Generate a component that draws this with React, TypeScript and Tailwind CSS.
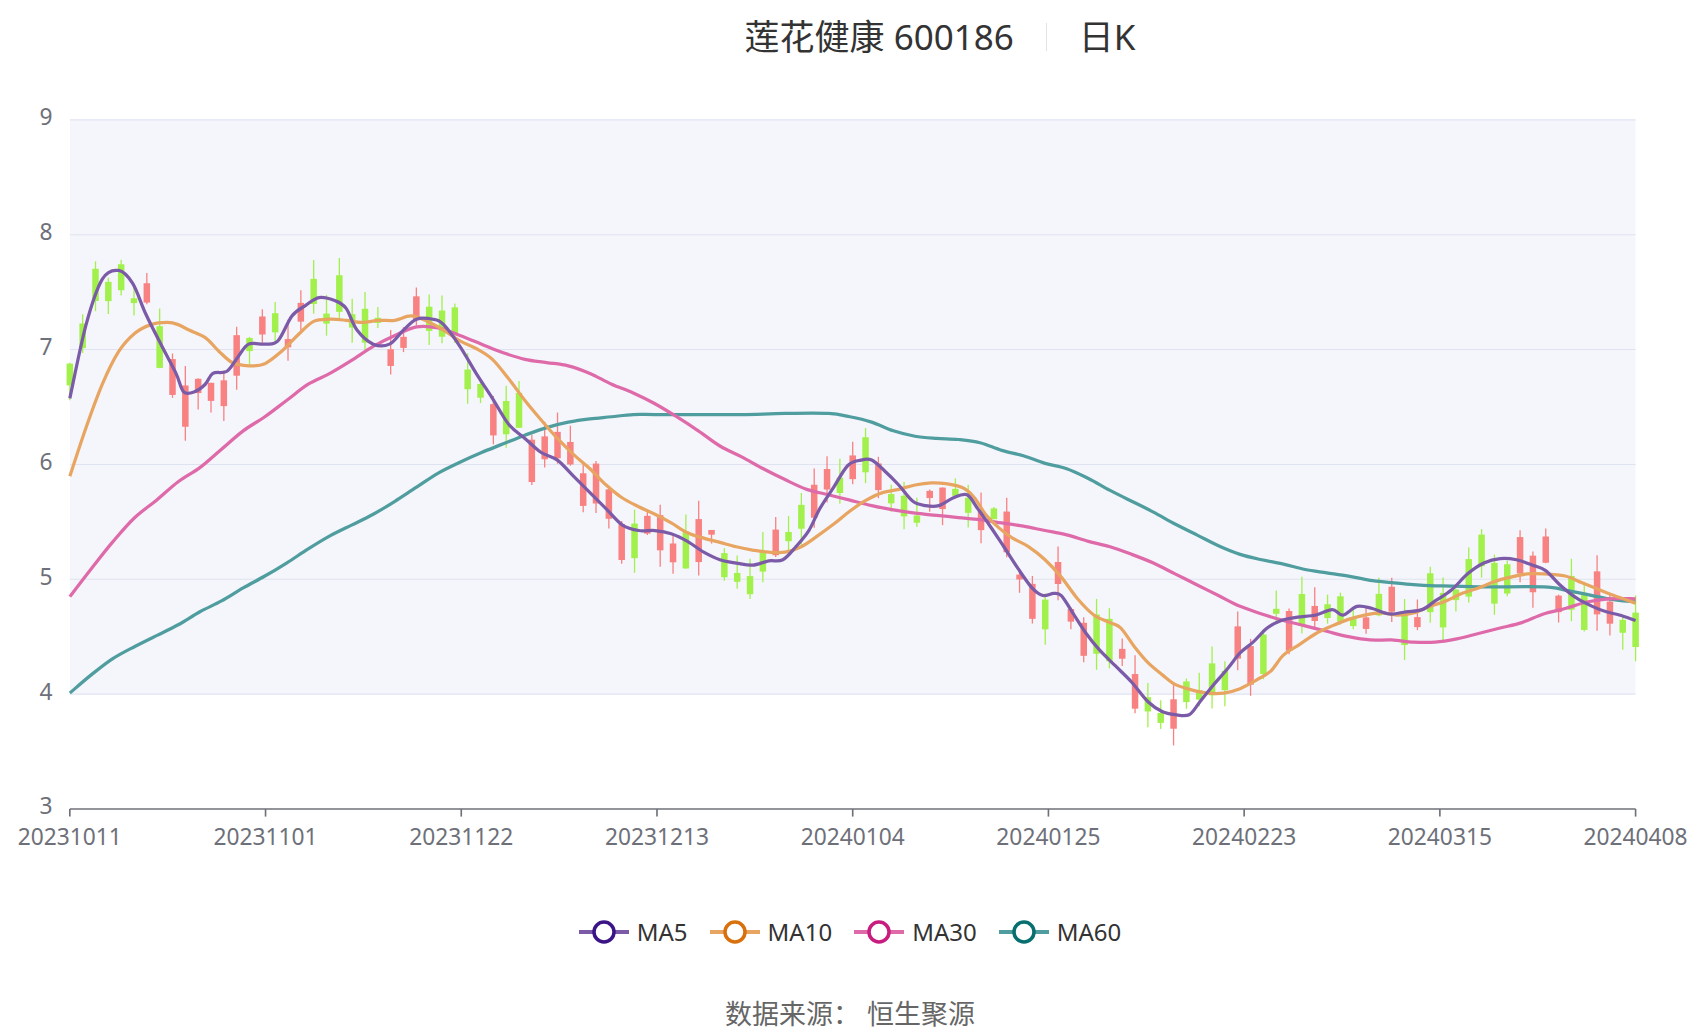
import React from "react";

type P = [number, number];

const MA5: P[] = [[60,368],[75,300],[90,258],[105,250],[118,262],[130,290],[145,320],[158,345],[165,362],[175,362],[185,355],[192,345],[205,343],[215,330],[225,318],[240,318],[252,315],[265,292],[278,282],[290,275],[305,278],[315,285],[325,305],[340,318],[355,318],[368,305],[380,295],[395,295],[405,300],[420,320],[435,345],[450,368],[465,392],[480,405],[495,418],[510,425],[525,440],[540,455],[555,470],[570,485],[585,490],[600,490],[615,493],[630,500],[645,510],[660,517],[675,520],[690,522],[705,518],[718,517],[730,505],[742,490],[752,470],[765,450],[778,430],[790,425],[800,425],[812,435],[825,448],[838,463],[850,467],[862,467],[875,460],[888,457],[898,470],[910,487],[922,505],[935,525],[948,543],[958,550],[968,548],[975,550],[985,565],[998,585],[1010,600],[1025,615],[1040,630],[1055,648],[1068,657],[1080,660],[1093,660],[1103,648],[1115,633],[1128,618],[1140,603],[1152,593],[1165,580],[1178,573],[1193,570],[1210,568],[1225,563],[1235,568],[1248,560],[1262,562],[1278,567],[1293,565],[1308,563],[1320,555],[1335,545],[1350,530],[1365,520],[1380,516],[1395,517],[1410,522],[1422,527],[1435,540],[1450,552],[1465,560],[1478,565],[1490,568],[1505,573]];
const MA10: P[] = [[60,440],[75,395],[90,355],[105,325],[120,308],[135,300],[150,298],[160,300],[170,305],[185,312],[198,325],[210,335],[225,338],[240,336],[255,325],[270,310],[285,297],[300,295],[315,296],[330,298],[345,296],[360,296],[375,292],[390,297],[405,305],[420,315],[435,322],[450,332],[465,350],[480,370],[495,388],[510,405],[525,420],[540,433],[555,448],[570,460],[585,468],[600,475],[615,483],[630,492],[645,497],[660,501],[675,505],[690,508],[705,510],[720,510],[735,505],[750,495],[765,484],[780,472],[795,462],[810,455],[825,452],[840,448],[855,446],[870,447],[885,451],[895,460],[905,475],[918,488],[930,497],[945,505],[960,517],[975,533],[990,553],[1005,568],[1020,575],[1030,580],[1043,598],[1055,612],[1068,623],[1080,632],[1095,637],[1110,640],[1125,640],[1140,636],[1155,628],[1168,620],[1180,605],[1195,595],[1210,585],[1225,578],[1240,572],[1255,568],[1270,566],[1285,568],[1300,566],[1315,560],[1330,555],[1345,548],[1360,543],[1375,537],[1390,533],[1405,530],[1420,530],[1440,532],[1455,538],[1470,544],[1485,550],[1505,557]];
const MA30: P[] = [[60,551],[80,525],[100,500],[120,478],[140,462],[160,445],[180,432],[200,415],[220,398],[240,385],[260,370],[280,355],[300,345],[320,333],[340,320],[360,310],[380,302],[400,303],[420,310],[440,318],[460,326],[480,332],[500,335],[520,338],[540,345],[560,355],[580,363],[600,373],[620,385],[640,398],[660,412],[680,422],[700,433],[720,443],[740,452],[760,457],[780,462],[800,467],[820,471],[840,474],[860,476],[880,478],[900,480],[920,483],[940,486],[960,490],[980,494],[1000,500],[1020,505],[1040,512],[1060,520],[1080,530],[1100,540],[1120,550],[1140,560],[1160,567],[1180,573],[1200,578],[1220,583],[1240,588],[1260,591],[1280,591],[1300,593],[1320,593],[1340,590],[1360,585],[1380,580],[1400,575],[1420,567],[1440,562],[1460,556],[1480,553],[1505,553]];
const MA60: P[] = [[60,640],[80,623],[100,608],[120,597],[140,587],[160,577],[180,565],[200,555],[220,543],[240,532],[260,520],[280,507],[300,495],[320,485],[340,475],[360,463],[380,450],[400,437],[420,427],[440,418],[460,410],[480,402],[500,395],[520,390],[540,387],[560,385],[580,383],[600,383],[640,383],[680,383],[720,382],[760,382],[780,385],[800,390],[820,398],[840,403],[860,405],[880,406],[900,409],[920,416],[940,421],[960,428],[980,433],[1000,442],[1020,453],[1040,463],[1060,473],[1080,484],[1100,494],[1120,504],[1140,512],[1160,517],[1180,521],[1200,526],[1220,529],[1240,532],[1260,536],[1280,538],[1300,540],[1320,541],[1360,542],[1420,542],[1440,545],[1460,549],[1480,553],[1505,556]];

function smooth(pts: P[]) {
  let d = `M${pts[0][0]},${pts[0][1]}`;
  for (let i = 0; i < pts.length - 1; i++) {
    const p0 = pts[i - 1] || pts[i], p1 = pts[i], p2 = pts[i + 1], p3 = pts[i + 2] || p2;
    const c1x = p1[0] + (p2[0] - p0[0]) / 6, c1y = p1[1] + (p2[1] - p0[1]) / 6;
    const c2x = p2[0] - (p3[0] - p1[0]) / 6, c2y = p2[1] - (p3[1] - p1[1]) / 6;
    d += ` C${c1x.toFixed(1)},${c1y.toFixed(1)} ${c2x.toFixed(1)},${c2y.toFixed(1)} ${p2[0]},${p2[1]}`;
  }
  return d;
}

function at(pts: P[], x: number) {
  for (let i = 0; i < pts.length - 1; i++) {
    if (x <= pts[i + 1][0]) {
      const t = (x - pts[i][0]) / (pts[i + 1][0] - pts[i][0]);
      return pts[i][1] + t * (pts[i + 1][1] - pts[i][1]);
    }
  }
  return pts[pts.length - 1][1];
}

let seed = 11;
const rnd = () => {
  seed = (seed * 16807) % 2147483647;
  return seed / 2147483647;
};

const candles = Array.from({ length: 123 }, (_, i) => {
  const x = 60 + i * (1445 / 122);
  const m = at(MA5, x) + (rnd() - 0.5) * 44;
  const h = 2 + rnd() * 18;
  const up = rnd() > 0.5;
  const top = m - h, bot = m + h;
  return { x, top, bot, hi: top - rnd() * 18, lo: bot + rnd() * 16, up };
});

const yTicks = [9, 8, 7, 6, 5, 4, 3];
const yOf = (v: number) => 111 + (9 - v) * 106;
const dates = ["20231011", "20231101", "20231122", "20231213", "20240104", "20240125", "20240223", "20240315", "20240408"];

const legend = [
  { name: "MA5", line: "#7b5ba8", dot: "#3b1585" },
  { name: "MA10", line: "#e8a562", dot: "#d8700c" },
  { name: "MA30", line: "#de6aaa", dot: "#c81c7e" },
  { name: "MA60", line: "#4f9d9f", dot: "#07706e" },
];

export default function App() {
  return (
    <div className="w-[1700px] h-[1034px] bg-white flex flex-col items-center" style={{ fontFamily: '"Noto Sans", "Noto Sans CJK SC", sans-serif' }}>
      <div className="h-[70px] flex items-center gap-8 text-[35px] text-[#333] pt-1 ml-[180px]">
        <span>莲花健康 600186</span>
        <span className="w-px h-7 bg-[#e3e3e3]" />
        <span>日K</span>
      </div>
      <svg viewBox="0 65 1560 740" width="1700" height="806" className="block">
        {yTicks.slice(0, 5).map((v) => (
          <rect key={v} x="60" y={yOf(v)} width="1445" height="106" fill="#f5f6fb" />
        ))}
        {yTicks.map((v) => (
          <g key={v}>
            <line x1="60" x2="1505" y1={yOf(v)} y2={yOf(v)} stroke={v === 3 ? "#6e7079" : "#dfe3f1"} strokeWidth={v === 3 ? 1.5 : 1} />
            <text x="44" y={yOf(v) + 5} textAnchor="end" fontSize="21" fill="#6e7079">{v}</text>
          </g>
        ))}
        {dates.map((d, i) => {
          const x = 60 + i * (1445 / 8);
          return (
            <g key={d}>
              <line x1={x} x2={x} y1="747" y2="754" stroke="#6e7079" strokeWidth="1.5" />
              <text x={x} y="780" textAnchor="middle" fontSize="21" fill="#6e7079">{d}</text>
            </g>
          );
        })}
        {candles.map((c, i) => {
          const col = c.up ? "#f88181" : "#a2f04c";
          return (
            <g key={i}>
              <line x1={c.x} x2={c.x} y1={c.hi} y2={c.lo} stroke={col} strokeWidth="1.2" />
              <rect x={c.x - 3} y={c.top} width="6" height={c.bot - c.top} fill={col} />
            </g>
          );
        })}
        <path d={smooth(MA60)} fill="none" stroke="#4f9d9f" strokeWidth="3" />
        <path d={smooth(MA30)} fill="none" stroke="#de6aaa" strokeWidth="3" />
        <path d={smooth(MA10)} fill="none" stroke="#e8a562" strokeWidth="3" />
        <path d={smooth(MA5)} fill="none" stroke="#7b5ba8" strokeWidth="3" />
      </svg>
      <div className="flex items-center gap-[22px] mt-[42px] text-[24px] text-[#333]">
        {legend.map((l) => (
          <div key={l.name} className="flex items-center gap-2">
            <svg width="50" height="28" viewBox="0 0 50 28">
              <line x1="0" x2="50" y1="14" y2="14" stroke={l.line} strokeWidth="4" />
              <circle cx="25" cy="14" r="10" fill="white" stroke={l.dot} strokeWidth="3.5" />
            </svg>
            <span>{l.name}</span>
          </div>
        ))}
      </div>
      <div className="mt-[44px] text-[27px] text-[#666]">数据来源：&nbsp;恒生聚源</div>
    </div>
  );
}
